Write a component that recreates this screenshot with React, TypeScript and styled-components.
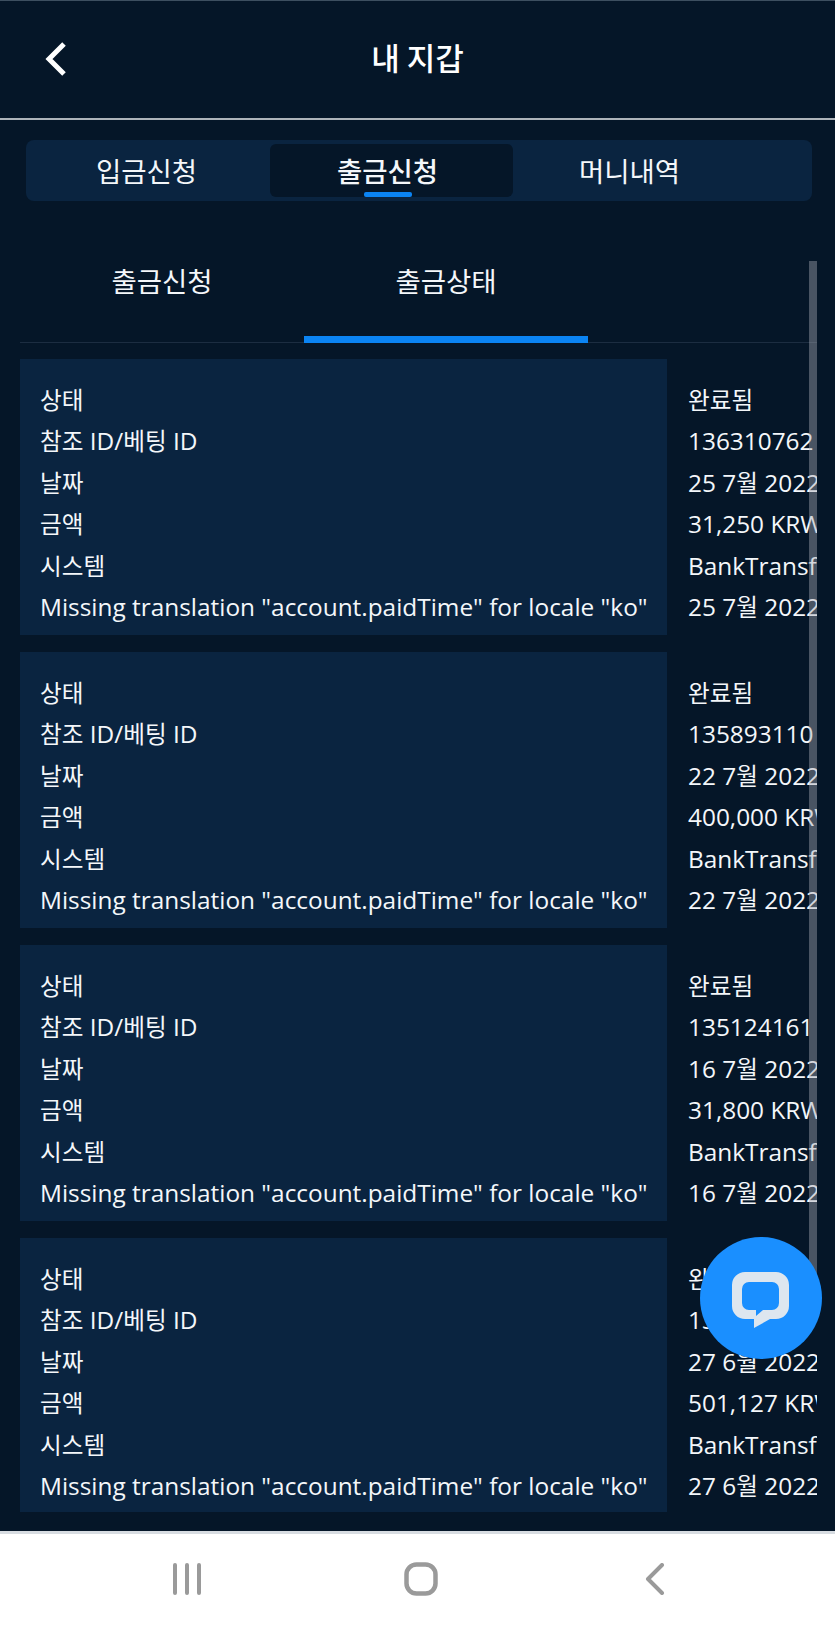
import React from "react";
import styled, { createGlobalStyle } from "styled-components";

const Global = createGlobalStyle`
  html, body { margin: 0; padding: 0; background: #051628; overflow: hidden; }
  body { font-family: "Open Sans", "Noto Sans CJK KR", sans-serif; color: #f4f7fa; }
  * { box-sizing: border-box; }
`;

const Screen = styled.div`
  position: relative;
  width: 835px;
  height: 1629px;
  display: flex;
  flex-direction: column;
  background: #051628;
  overflow: hidden;
`;

const Header = styled.header`
  flex: 0 0 120px;
  display: grid;
  grid-template-columns: 1fr auto 1fr;
  align-items: center;
  padding: 0 0 2px 44px;
  border-top: 1px solid #3d4f60;
  border-bottom: 2px solid #aeb4ba;
  background: #051628;
`;

const BackButton = styled.div`
  display: flex;
  align-items: center;
  height: 36px;
`;

const Title = styled.h1`
  margin: -4px 0 0 -44px;
  font-size: 31px;
  line-height: 40px;
  font-weight: 500;
  color: #fff;
  font-family: "Noto Sans CJK KR", sans-serif;
`;

const TabBar = styled.nav`
  flex: 0 0 61px;
  display: flex;
  margin: 20px 23px 0 26px;
  padding: 4px 0 4px 1px;
  background: #0a2440;
  border-radius: 8px;
`;

const Tab = styled.div<{ $active?: boolean; $inset: number }>`
  position: relative;
  flex: 0 0 243px;
  display: flex;
  align-items: center;
  justify-content: center;
  padding: 0 ${(p) => p.$inset}px 2px 0;
  font-size: 27.5px;
  font-family: "Noto Sans CJK KR", sans-serif;
  font-weight: ${(p) => (p.$active ? 500 : 400)};
  border-radius: 6px;
  color: #f4f7fa;
  background: ${(p) => (p.$active ? "#051628" : "transparent")};
`;

const TabMark = styled.span`
  position: absolute;
  left: 94px;
  bottom: 0;
  width: 48px;
  height: 5px;
  border-radius: 2px;
  background: #0b84f3;
`;

const Panel = styled.section`
  position: relative;
  flex: 1;
  min-height: 0;
  margin: 60px 18px 0 20px;
  overflow: hidden;
`;

const SubTabs = styled.div`
  display: flex;
  height: 82px;
  border-bottom: 1px solid #1c2d41;
`;

const SubTab = styled.div<{ $active?: boolean }>`
  flex: 0 0 284px;
  height: 82px;
  display: flex;
  justify-content: center;
  font-size: 27.5px;
  line-height: 38px;
  font-family: "Noto Sans CJK KR", sans-serif;
  color: #f4f7fa;
  border-bottom: 7px solid ${(p) => (p.$active ? "#0b84f3" : "transparent")};
`;

const CardList = styled.div`
  display: flex;
  flex-direction: column;
  gap: 17px;
  padding-top: 16px;
`;

const Card = styled.article`
  display: flex;
  height: 276px;
  &:last-child {
    height: 274px;
  }
`;

const LabelColumn = styled.div`
  flex: 0 0 647px;
  padding: 20px 0 0 20px;
  background: #0a2440;
`;

const ValueColumn = styled.div`
  flex: 0 0 auto;
  padding: 20px 0 0 21px;
`;

const Line = styled.div`
  height: 41.4px;
  line-height: 41.4px;
  font-size: 24.4px;
  white-space: nowrap;
  color: #f4f7fa;
`;

const Hangul = styled.span`
  font-size: 23.6px;
  font-family: "Noto Sans CJK KR", sans-serif;
`;

const ScrollThumb = styled.div`
  position: absolute;
  top: 0;
  right: 0;
  width: 8px;
  height: 1040px;
  background: rgba(170, 172, 180, 0.42);
`;

const ChatBubble = styled.div`
  position: absolute;
  left: 700px;
  top: 1237px;
  width: 122px;
  height: 122px;
  border-radius: 50%;
  background: #1a8fff;
`;

const BottomNav = styled.footer`
  flex: 0 0 98px;
  display: grid;
  grid-template-columns: repeat(3, 234px);
  align-items: center;
  justify-items: center;
  padding: 0 0 6px 70px;
  background: #fff;
  border-top: 3px solid #d7dce1;
`;

const NavIcon = styled.svg`
  display: block;
  color: #9a9a9a;
`;

const rows = [
  { date: "25 7월 2022", id: "136310762", amount: "31,250 KRW" },
  { date: "22 7월 2022", id: "135893110", amount: "400,000 KRW" },
  { date: "16 7월 2022", id: "135124161", amount: "31,800 KRW" },
  { date: "27 6월 2022", id: "133251847", amount: "501,127 KRW" },
];

const labels = [
  "상태",
  "참조 ID/베팅 ID",
  "날짜",
  "금액",
  "시스템",
  'Missing translation "account.paidTime" for locale "ko"',
];

// Hangul runs are set a little smaller than the Latin text around them.
function Text({ children }: { children: string }) {
  return (
    <Line>
      {children.split(/([가-힣]+)/).map((part, i) =>
        i % 2 ? <Hangul key={i}>{part}</Hangul> : part
      )}
    </Line>
  );
}

export default function App() {
  return (
    <Screen>
      <Global />
      <Header>
        <BackButton>
          <svg width="24" height="36" viewBox="0 0 24 36" fill="none">
            <path d="M20 3 L5 18 L20 33" stroke="#fff" strokeWidth="5" />
          </svg>
        </BackButton>
        <Title>내 지갑</Title>
      </Header>
      <TabBar>
        <Tab $inset={4}>입금신청</Tab>
        <Tab $active $inset={8}>
          출금신청
          <TabMark />
        </Tab>
        <Tab $inset={10}>머니내역</Tab>
      </TabBar>
      <Panel>
        <SubTabs>
          <SubTab>출금신청</SubTab>
          <SubTab $active>출금상태</SubTab>
        </SubTabs>
        <CardList>
          {rows.map((r) => (
            <Card key={r.id}>
              <LabelColumn>
                {labels.map((l) => (
                  <Text key={l}>{l}</Text>
                ))}
              </LabelColumn>
              <ValueColumn>
                <Text>완료됨</Text>
                <Text>{r.id}</Text>
                <Text>{r.date}</Text>
                <Text>{r.amount}</Text>
                <Text>BankTransfer</Text>
                <Text>{r.date}</Text>
              </ValueColumn>
            </Card>
          ))}
        </CardList>
        <ScrollThumb />
      </Panel>
      <BottomNav>
        <NavIcon width="30" height="32" viewBox="0 0 30 32" fill="none" stroke="currentColor" strokeWidth="4" strokeLinecap="round">
          <path d="M3 2 V30 M15 2 V30 M27 2 V30" />
        </NavIcon>
        <NavIcon width="34" height="34" viewBox="0 0 34 34" fill="none" stroke="currentColor" strokeWidth="4.5">
          <rect x="2.5" y="2.5" width="29" height="29" rx="10" />
        </NavIcon>
        <NavIcon width="20" height="32" viewBox="0 0 20 32" fill="none" stroke="currentColor" strokeWidth="4" strokeLinecap="round" strokeLinejoin="round">
          <path d="M17 2 L3 16 L17 30" />
        </NavIcon>
      </BottomNav>
      <ChatBubble>
        <svg width="122" height="122" viewBox="0 0 122 122">
          <path
            fillRule="evenodd"
            fill="#dde6ef"
            d="M45 35 H76 a13 13 0 0 1 13 13 V69 a13 13 0 0 1 -13 13 H70 L54 91 V82 H45 a13 13 0 0 1 -13 -13 V48 a13 13 0 0 1 13 -13 Z M49 45 a7 7 0 0 0 -7 7 V66 a7 7 0 0 0 7 7 H56 V79 L63 73 H72 a7 7 0 0 0 7 -7 V52 a7 7 0 0 0 -7 -7 Z"
          />
        </svg>
      </ChatBubble>
    </Screen>
  );
}
